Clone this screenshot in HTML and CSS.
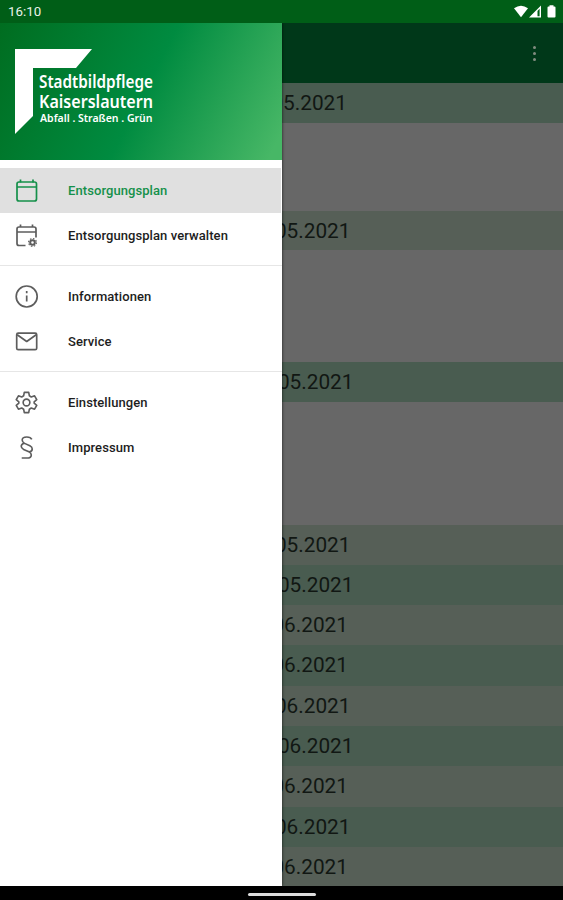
FILE: index.html
```html
<!DOCTYPE html>
<html lang="de">
<head>
<meta charset="utf-8">
<title>Stadtbildpflege Kaiserslautern</title>
<link rel="stylesheet" href="styles.css">
</head>
<body>
<div class="screen">
  <header class="status">
    <span>16:10</span>
    <svg width="44" height="16" viewBox="0 0 44 16" fill="#fff">
      <path d="M1 4.200Q8-.8 15 4.200L8 13.200Z"/>
      <path fill-rule="evenodd" d="M28 1.500V13.500H16ZM26.600 4.800L24.500 6.900V12.300H26.600Z"/>
      <path d="M34.500 3.500Q34.500 2.500 35.500 2.500H36.500V1.300H40.500V2.500H41.500Q42.500 2.500 42.500 3.500V12.500Q42.500 13.500 41.500 13.500H35.500Q34.500 13.500 34.500 12.500Z"/>
    </svg>
  </header>
  <div class="stage">
    <main class="page">
      <div class="appbar"><div class="more"><i></i><i></i><i></i></div></div>
      <section class="day gap-s"><h2 class="date dark end-a">05.2021</h2></section>
      <section class="day gap-m"><h2 class="date end-c">05.2021</h2></section>
      <section class="day gap-l"><h2 class="date dark end-d">05.2021</h2></section>
      <section class="plan">
        <h2 class="date end-c">05.2021</h2>
        <h2 class="date dark end-d">05.2021</h2>
        <h2 class="date end-b">06.2021</h2>
        <h2 class="date dark end-b">06.2021</h2>
        <h2 class="date end-c">06.2021</h2>
        <h2 class="date dark end-d">06.2021</h2>
        <h2 class="date end-b">06.2021</h2>
        <h2 class="date dark end-c">06.2021</h2>
        <h2 class="date end-b">06.2021</h2>
      </section>
    </main>
    <aside class="drawer">
      <div class="brand">
        <svg class="logo" width="150" height="90" viewBox="0 0 150 90" fill="#fff">
          <path d="M0 0H77L61 19H18V67L0 85Z"/>
          <g class="logo-text">
            <text x="24" y="39" font-size="17.500" textLength="114" lengthAdjust="spacingAndGlyphs">Stadtbildpflege</text>
            <text x="24" y="59" font-size="17.500" textLength="114" lengthAdjust="spacingAndGlyphs">Kaiserslautern</text>
            <text x="25" y="73" font-size="10.500" textLength="112.500" lengthAdjust="spacingAndGlyphs">Abfall . Straßen . Grün</text>
          </g>
        </svg>
      </div>
      <nav>
        <ul class="group">
          <li class="item active">
            <svg class="icon" viewBox="0 0 24 24"><rect x="2" y="3" width="19.500" height="19" rx="2"/><path d="M2 8H21.500M5.500 .5V3.500M18 .5V3.500"/></svg>
            <span>Entsorgungsplan</span>
          </li>
          <li class="item">
            <svg class="icon" viewBox="0 0 24 24"><path d="M10.500 21.500H4Q2 21.500 2 19.500V5Q2 3 4 3H19Q21 3 21 5V13.500M2 8H21M5.500 .5V3.500M17.500 .5V3.500"/><circle class="cog" cx="17.500" cy="18.500" r="2.300"/><circle class="teeth" cx="17.500" cy="18.500" r="3.900"/></svg>
            <span>Entsorgungsplan verwalten</span>
          </li>
        </ul>
        <ul class="group">
          <li class="item">
            <svg class="icon" viewBox="0 0 24 24"><circle cx="11.700" cy="11.500" r="10.500"/><path d="M11.700 10.500V16.500M11.700 6V8.300"/></svg>
            <span>Informationen</span>
          </li>
          <li class="item">
            <svg class="icon" viewBox="0 0 24 24"><rect x="1.700" y="3.200" width="20" height="16.500" rx="1.500"/><path d="M2.200 4.700L11.700 11.500L21.200 4.700"/></svg>
            <span>Service</span>
          </li>
        </ul>
        <ul class="group">
          <li class="item">
            <svg class="icon gear" viewBox="0 0 24 24"><path d="M9.700 1.500H14.300L15 5L17 6.200L20.400 5L22.700 9L20 11.300V12.700L22.700 15L20.400 19L17 17.800L15 19L14.300 22.500H9.700L9 19L7 17.800L3.600 19L1.300 15L4 12.700V11.300L1.300 9L3.600 5L7 6.200L9 5Z"/><circle cx="12" cy="12" r="3.500"/></svg>
            <span>Einstellungen</span>
          </li>
          <li class="item">
            <svg class="icon gear" viewBox="0 0 24 24"><path d="M17.500 3.500Q16.500 1 12.300 1Q7.500 1 7.500 4.300Q7.500 6.500 10 7.700L15.500 10.200Q18 11.500 18 13.500Q18 16 15 16.500M9.500 7.500Q6.500 8.300 6.500 10.800Q6.500 12.800 9 14L14.500 16.500Q17 17.700 17 19.700Q17 23 12.300 23H7"/></svg>
            <span>Impressum</span>
          </li>
        </ul>
      </nav>
    </aside>
  </div>
  <footer class="navbar"><div class="handle"></div></footer>
</div>
</body>
</html>
```
FILE: styles.css
```css
* { box-sizing: border-box; }
body { margin: 0; font-family: Roboto, sans-serif; }
ul { margin: 0; padding: 0; list-style: none; }
.screen { width: 563px; height: 900px; display: flex; flex-direction: column; overflow: hidden; }
.status { height: 23px; background: #005e17; color: #e9f3e9; display: flex; align-items: center; justify-content: space-between; padding: 1px 6px 0 8px; font-size: 13.3px; line-height: 20px; }
.stage { position: relative; height: 863px; overflow: hidden; }
.page { height: 100%; background: #676767; }
.appbar { height: 60px; background: #003819; display: flex; align-items: center; justify-content: flex-end; padding-right: 27px; }
.more { display: flex; flex-direction: column; gap: 3px; }
.more i { width: 3px; height: 3px; border-radius: 50%; background: #828c80; }
.day.gap-s { height: 127.5px; }
.day.gap-m { height: 151.5px; }
.day.gap-l { height: 162.500px; }
.day .date { height: 39.5px; }
.plan { display: grid; grid-auto-rows: 40.3px; }
.date { margin: 0; background: #565f57; color: #111713; font-size: 20.8px; font-weight: 400; text-align: right; line-height: 41px; }
.date.dark { background: #495c50; }
.end-a { padding-right: 216px; }
.end-b { padding-right: 215px; }
.end-c { padding-right: 212.500px; }
.end-d { padding-right: 209.500px; }
.drawer { position: absolute; left: 0; top: 0; width: 282px; height: 863px; background: #fff; box-shadow: 0 0 3px rgba(0, 0, 0, .7); }
.brand { height: 137px; padding: 26px 0 0 15px; background: linear-gradient(117deg, #006d20 0%, #008b40 51%, #47b766 96%); }
.logo { display: block; }
.logo-text { font-family: "Noto Sans", sans-serif; font-weight: 600; }
.group { padding-bottom: 7px; }
.group:first-child { padding-top: 8px; }
.group + .group { border-top: 1px solid #e6e6e6; padding-top: 8px; }
.item { height: 45px; display: flex; align-items: center; padding-left: 15px; gap: 29px; color: #1d1d1d; font-size: 13px; font-weight: 500; letter-spacing: .08px; }
.item.active { background: #e0e0e0; color: #15904a; width: 281px; }
.icon { width: 24px; height: 24px; fill: none; stroke: #5d5d5d; stroke-width: 1.7; stroke-linejoin: round; }
.icon.gear { width: 23px; height: 23px; margin-right: 1px; }
.active .icon { stroke: #15904a; }
.icon .cog { stroke-width: 2; }
.icon .teeth { stroke-width: 1.2; stroke-dasharray: 1.530 1.530; }
.navbar { height: 14px; background: #000; display: flex; justify-content: center; padding-top: 7px; }
.handle { width: 68px; height: 3px; border-radius: 2px; background: #ddd; }
```
